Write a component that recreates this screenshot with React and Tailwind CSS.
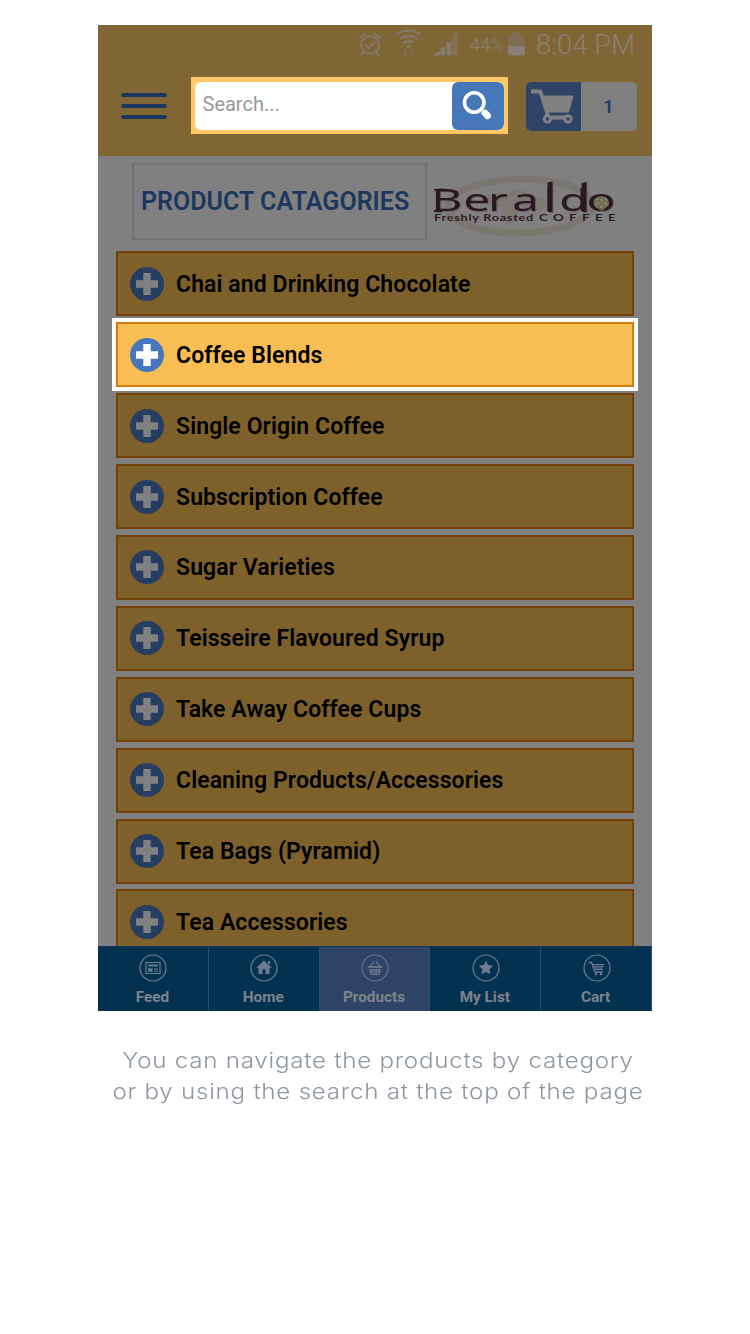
import React from "react";

const categories = [
  "Chai and Drinking Chocolate",
  "Coffee Blends",
  "Single Origin Coffee",
  "Subscription Coffee",
  "Sugar Varieties",
  "Teisseire Flavoured Syrup",
  "Take Away Coffee Cups",
  "Cleaning Products/Accessories",
  "Tea Bags (Pyramid)",
  "Tea Accessories",
];

function StatusBar() {
  return (
    <div className="flex h-[38px] items-center pl-[259px]">
      <svg width="150" height="38" viewBox="357 25 150 38" className="shrink-0" fill="none" stroke="#84776a" strokeWidth="2.200">
        <circle cx="370" cy="45" r="9" />
        <path d="M359.500 38.500l6-5.500M380.500 38.500l-6-5.500M363.500 52.500l-3 3M376.500 52.500l3 3M365.500 44.500l3.500 3.500 6-6" />
        <path d="M396.500 34.500q12-8 24 0M400 39q8.500-6 17 0M403.500 43q5-4 10 0" strokeWidth="2.700" />
        <circle cx="408.500" cy="46.500" r="2" fill="#84776a" stroke="none" />
        <path d="M405.500 48.500v7M403 53l2.500 2.500 2.500-2.500M412 56v-7M409.500 51.500l2.500-2.500 2.500 2.500" strokeWidth="1.600" stroke="#7f6f58" />
        <g fill="#867c70" stroke="none">
          <path d="M433.500 55.500v-1l6.500-4v5zM440.500 47.500h4.500v8h-4.500zM446.500 42h4.500v13.500h-4.500z" />
          <path d="M451.500 37.500h2v18h-2zM454 32.500h3.500v23H454z" fill="#82725c" />
        </g>
        <text x="470" y="51" fontFamily="Roboto, sans-serif" fontSize="18" textLength="34" lengthAdjust="spacingAndGlyphs" fill="#867966" stroke="none">44%</text>
      </svg>
      <svg width="19" height="38" viewBox="507 25 19 38" className="shrink-0">
        <path d="M508 36h4v-4.500h8V36h5v10h-17z" fill="#7f6d53" />
        <path d="M508 46h17v9.500h-17z" fill="#887f76" />
      </svg>
      <span className="ml-[10px] whitespace-nowrap pt-[1px] font-['Roboto',sans-serif] text-[27.500px] font-light leading-none text-[#8a8074]">8:04 PM</span>
    </div>
  );
}

function CartIcon() {
  return (
    <svg width="56" height="50" viewBox="525 82 56 50" fill="none" stroke="#818181" strokeWidth="2.500">
      <path d="M530 91.500h9.500l7.500 24.500" strokeLinejoin="round" strokeWidth="3.800" />
      <path d="M540.500 96h31.500l-4.500 16h-21.500z" fill="#818181" stroke="#818181" strokeWidth="1" />
      <path d="M547 117.500h21" strokeWidth="4" />
      <circle cx="546.500" cy="119" r="3.200" fill="#2e4467" strokeWidth="3" />
      <circle cx="567" cy="119" r="3.200" fill="#2e4467" strokeWidth="3" />
    </svg>
  );
}

function Header() {
  return (
    <header className="h-[131px] shrink-0 bg-[#806535]">
      <StatusBar />
      <div className="flex items-start pl-[23px] pt-[14px]">
        <div className="mt-[15.500px] flex w-[46px] flex-col gap-[7.200px]">
          <span className="h-[4px] rounded-full bg-[#1d3860]" />
          <span className="h-[4px] rounded-full bg-[#1d3860]" />
          <span className="h-[4px] rounded-full bg-[#1d3860]" />
        </div>
        <div className="ml-[24px] h-[57px] w-[317px] bg-[#ffc766] px-[4px] pt-[5px]">
          <div className="flex h-[48px] overflow-hidden rounded-[6px] bg-white">
            <span className="flex-1 pl-[7.500px] pt-[9px] font-['Roboto',sans-serif] text-[20px] leading-[27px] text-[#999]">Search...</span>
            <div className="w-[52px] rounded-[6px] bg-[#4677b9]">
              <svg width="52" height="48" viewBox="452 82 52 48" fill="none" stroke="#fff">
                <circle cx="474.200" cy="102.500" r="9.700" strokeWidth="3.600" />
                <path d="M485 113l2.500 2.800" strokeWidth="6.800" strokeLinecap="round" />
              </svg>
            </div>
          </div>
        </div>
        <div className="ml-[17.500px] mt-[5px] flex h-[49px] w-[111px] overflow-hidden rounded-[5px] bg-[#808080]">
          <div className="h-full w-[55px] bg-[#2e4467]"><CartIcon /></div>
          <span className="flex flex-1 items-center justify-center pt-[1px] font-['Roboto',sans-serif] text-[19px] font-semibold text-[#213c66]">1</span>
        </div>
      </div>
    </header>
  );
}

function Logo() {
  return (
    <svg width="190" height="72" viewBox="430 170 190 72" className="shrink-0">
      <ellipse cx="520" cy="207" rx="72" ry="27" fill="none" stroke="#79776f" strokeWidth="7" transform="rotate(-1 520 207)" />
      <g fill="#7a7870">
        <ellipse cx="496" cy="201" rx="12" ry="7" />
        <ellipse cx="518" cy="198" rx="11" ry="7" />
        <ellipse cx="534" cy="205" rx="12" ry="7" />
        <ellipse cx="510" cy="214" rx="9" ry="11" />
      </g>
      <g className="drop-shadow-[1.5px_1.5px_0.5px_#6a6466]" fill="#291721">
        <text
          transform="scale(1.6 1)"
          x="269.600 289.600 305 320 339.600 349.600 366.600"
          y="212.500"
          fontFamily="'Noto Sans', sans-serif"
          fontSize="30"
        >Beraldo</text>
        <path d="M547.500 183.500l5-1v30.500h-4.500zM581.500 184l5-1v30h-4zM434 190l10-.5v2h-10zM434 211h8v2h-8z" />
      </g>
      <g fill="none" stroke="#716b43" strokeWidth="1.600">
        <circle cx="601.500" cy="201" r="2.600" />
        <circle cx="601.500" cy="208" r="2.600" />
        <circle cx="597.500" cy="204.500" r="2.600" />
        <circle cx="605.500" cy="204.500" r="2.600" />
      </g>
      <g fontFamily="Lato, sans-serif" fontWeight="700" fill="#2b1a23">
        <text x="434" y="221.800" fontSize="8.500" letterSpacing="0.500" textLength="100" lengthAdjust="spacingAndGlyphs">Freshly Roasted</text>
        <text x="539" y="221.800" fontSize="8.500" letterSpacing="3.500" textLength="82" lengthAdjust="spacingAndGlyphs">COFFEE</text>
      </g>
    </svg>
  );
}

function Category({ name, active }) {
  return (
    <div className={active
      ? "relative z-10 flex h-[65px] shrink-0 items-center border-2 border-[#d97c10] bg-[#f9be53] pl-[12px] shadow-[0_0_0_4px_white]"
      : "flex h-[65px] shrink-0 items-center border-2 border-[#764106] bg-[#7d602a] pl-[12px]"}>
      <span className={active
        ? "flex size-[34px] items-center justify-center rounded-full bg-[#4677bc] text-white"
        : "flex size-[34px] items-center justify-center rounded-full bg-[#253d61] text-[#808080]"}>
        <svg width="22" height="22" viewBox="0 0 22 22" fill="currentColor"><path d="M7.300 0h7.400v7.300H22v7.400h-7.300V22H7.300v-7.300H0V7.300h7.300z" /></svg>
      </span>
      <span className="ml-[12px] whitespace-nowrap pt-[1px] font-['Roboto',sans-serif] text-[23px] font-semibold leading-none tracking-[0.090px] text-black">{name}</span>
    </div>
  );
}

const icons = {
  Feed: (
    <g>
      <path d="M7 8.500h14v11H7z" fill="none" stroke="currentColor" strokeWidth="1.200" />
      <path d="M9 10.500h10v2H9zM9 14.200h4.500v3.500H9zM15 14.500h4v1h-4zM15 16.700h4v1h-4z" />
    </g>
  ),
  Home: <path d="M14 6.500l7.500 7-1 1-1-1V20h-4v-4.500h-3V20h-4v-6.500l-1 1-1-1zM18 7h2v4l-2-2z" />,
  Products: (
    <g>
      <path d="M9 13l4-6M19 13l-4-6" fill="none" stroke="currentColor" strokeWidth="1.300" />
      <path d="M6.500 12h15v2h-15zM8 15h12l-1.500 6h-9z" />
      <path d="M11.500 16v4M14 16v4M16.500 16v4" stroke="#2e4467" strokeWidth=".6" />
    </g>
  ),
  "My List": <path d="M14 6.500l2.200 4.600 5 .7-3.600 3.500.9 5-4.500-2.400-4.500 2.400.9-5-3.600-3.500 5-.7z" />,
  Cart: (
    <g>
      <path d="M5.500 8.500h3l3.500 9.500h8" fill="none" stroke="currentColor" strokeWidth="1.300" />
      <path d="M10 10h11.500l-.4 1.300H10.400zM10.800 12.300h10l-.5 1.300h-9zM11.700 14.600H20l-.5 1.400h-7.300z" />
      <circle cx="13" cy="20" r="1.200" /><circle cx="18" cy="20" r="1.200" />
    </g>
  ),
};

function Navigation() {
  return (
    <nav className="grid h-[65px] shrink-0 grid-cols-5 border-t border-[#153a59] bg-[#033150]">
      {Object.keys(icons).map((name) => (
        <div key={name} className={name === "Products"
          ? "flex flex-col items-center border-r border-[#304e75] bg-[#2e4467] pt-[7px] text-[#65718a]"
          : "flex flex-col items-center border-r border-[#304e75] pt-[7px] text-[#6d7c90]"}>
          <svg width="28" height="28" viewBox="0 0 28 28" fill="currentColor" className="ml-[1px]">
            <circle cx="14" cy="14" r="13" fill="none" stroke="currentColor" strokeWidth="1.200" />
            {icons[name]}
          </svg>
          <span className="mr-[1px] mt-[6.500px] font-['Roboto',sans-serif] text-[15.300px] font-bold leading-[16px] text-[#808389]">{name}</span>
        </div>
      ))}
    </nav>
  );
}

export default function App() {
  return (
    <div className="min-h-[1334px] w-[750px] bg-white pt-[25px]">
      <main className="ml-[98px] flex h-[986px] w-[554px] flex-col bg-[#808080]">
        <Header />
        <section className="flex min-h-0 flex-1 flex-col overflow-hidden">
          <div className="flex h-[95.400px] shrink-0 pl-[34px] pt-[7.400px]">
            <h1 className="flex h-[77px] w-[295px] items-center whitespace-nowrap border-2 border-[#727272] pl-[7px] font-['Roboto',sans-serif] text-[25px] font-semibold tracking-[0.030px] text-[#1c385f]">PRODUCT CATAGORIES</h1>
            <div className="ml-[3px] mt-[6px]"><Logo /></div>
          </div>
          <div className="flex flex-col gap-[5.900px] pl-[18px] pr-[18px]">
            {categories.map((name) => <Category key={name} name={name} active={name === "Coffee Blends"} />)}
          </div>
        </section>
        <Navigation />
      </main>
      <p className="ml-[6px] mt-[34px] scale-x-110 text-center font-['Inter',sans-serif] text-[22px] font-light leading-[31px] tracking-[0.660px] text-[#8f97a1]">
        <span className="block whitespace-nowrap">You can navigate the products by category</span>
        <span className="block whitespace-nowrap">or by using the search at the top of the page</span>
      </p>
    </div>
  );
}
